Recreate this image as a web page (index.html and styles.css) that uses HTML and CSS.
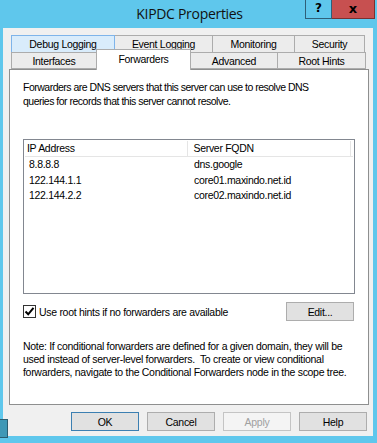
FILE: index.html
```html
<!DOCTYPE html>
<html>
<head>
  <title>KIPDC Properties</title>
  <link rel="stylesheet" href="styles.css">
</head>
<body>

<div class="window">
  <div class="titlebar">
    <span class="title">KIPDC Properties</span>
    <div class="caption-buttons">
      <span class="cap-btn help-btn">?</span>
      <span class="cap-btn close-btn">x</span>
    </div>
  </div>

  <div class="client">
    <div class="tab-row back">
      <div class="tab hover t1">Debug Logging</div>
      <div class="tab t2">Event Logging</div>
      <div class="tab t3">Monitoring</div>
      <div class="tab t4">Security</div>
    </div>
    <div class="tab-row front">
      <div class="tab t5">Interfaces</div>
      <div class="tab selected t6">Forwarders</div>
      <div class="tab t7">Advanced</div>
      <div class="tab t8">Root Hints</div>
    </div>

    <div class="panel">
      <p class="intro">Forwarders are DNS servers that this server can use to resolve DNS<br>queries for records that this server cannot resolve.</p>

      <div class="listbox">
        <div class="list-header">
          <div class="col ip">IP Address</div>
          <div class="col fqdn">Server FQDN</div>
          <div class="col rest"></div>
        </div>
        <div class="list-row"><span class="ip">8.8.8.8</span><span class="fqdn">dns.google</span></div>
        <div class="list-row"><span class="ip">122.144.1.1</span><span class="fqdn">core01.maxindo.net.id</span></div>
        <div class="list-row"><span class="ip">122.144.2.2</span><span class="fqdn">core02.maxindo.net.id</span></div>
      </div>

      <div class="option-row">
        <label class="check">
          <span class="box">
            <svg width="11" height="11" viewBox="0 0 11 11"><path d="M1.5 5.5 L4.2 8.3 L9.5 1.8" fill="none" stroke="#000" stroke-width="2"/></svg>
          </span>
          Use root hints if no forwarders are available
        </label>
        <button class="btn edit-btn">Edit...</button>
      </div>

      <p class="note">Note: If conditional forwarders are defined for a given domain, they will be<br>used instead of server-level forwarders.&nbsp; To create or view conditional<br>forwarders, navigate to the Conditional Forwarders node in the scope tree.</p>
    </div>

    <div class="dialog-buttons">
      <button class="btn default">OK</button>
      <button class="btn">Cancel</button>
      <button class="btn" disabled>Apply</button>
      <button class="btn">Help</button>
    </div>
  </div>
</div>

<div class="behind"></div>

</body>
</html>
```

FILE: styles.css
```css
body {
  margin: 0;
  background: #5fc7ec;
  font-family: 'Liberation Sans', Arial, sans-serif;
  font-size: 10.5px;
  letter-spacing: -0.3px;
  color: #000;
  width: 377px;
  height: 443px;
  overflow: hidden;
  position: relative;
  white-space: nowrap;
}

.titlebar {
  position: relative;
  height: 28px;
  text-align: center;
}

.title {
  display: inline-block;
  font-family: 'Open Sans', sans-serif;
  font-size: 14px;
  letter-spacing: -0.3px;
  line-height: 27px;
  margin-left: 2px;
  color: #111;
}

.caption-buttons {
  position: absolute;
  top: 0;
  right: 2px;
  display: flex;
}

.cap-btn {
  height: 18px;
  line-height: 17px;
  text-align: center;
  font-family: 'DejaVu Sans', sans-serif;
  font-weight: bold;
  font-size: 12px;
  letter-spacing: 0;
  border: 1px solid #2f5f78;
  border-top: none;
}

.help-btn {
  width: 25px;
  background: #5fc7ec;
}

.close-btn {
  width: 42px;
  background: #c75050;
  border-left: none;
  border-color: #7a3030;
  font-size: 13px;
}

.client {
  background: #f0f0f0;
  margin: 0 4px 0 3px;
  height: 408px;
  padding: 7px 5px 0 6px;
  box-sizing: border-box;
}

/* tabs */
.tab-row {
  display: flex;
  margin-left: 2px;
  height: 17px;
}

.tab {
  box-sizing: border-box;
  height: 17px;
  border: 1px solid #acacac;
  border-left: none;
  background: #ececec;
  text-align: center;
  line-height: 16px;
}

.tab-row .tab:first-child {
  border-left: 1px solid #acacac;
}

.tab-row.back .tab {
  border-bottom: none;
}

.tab.hover {
  background: #d9ecfb;
  border-color: #7eb4ea;
}

.tab-row.back .tab.hover {
  border-left-color: #7eb4ea;
}

.front {
  position: relative;
  z-index: 1;
}

.tab.selected {
  background: #fff;
  height: 21px;
  margin-top: -3px;
  border-bottom: none;
  border-left: 1px solid #acacac;
  line-height: 18px;
  margin-left: -1px;
  position: relative;
}

.t1 { width: 104px; }
.t2 { width: 98px; }
.t3 { width: 82px; }
.t4 { width: 70px; }
.t5 { width: 86px; }
.t6 { width: 95px; }
.t7 { width: 87px; }
.t8 { width: 88px; }

.panel {
  background: #fff;
  border: 1px solid #8e8f8f;
  width: 360px;
  height: 336px;
  box-sizing: border-box;
  margin-top: 0;
  padding: 0 0 0 13px;
}

.intro {
  margin: 10px 0 0;
  line-height: 14px;
  letter-spacing: -0.5px;
}

.listbox {
  margin-top: 31px;
  width: 332px;
  height: 155px;
  box-sizing: border-box;
  border: 1px solid #828790;
  padding: 1px;
}

.list-header {
  display: flex;
  height: 16px;
  border-bottom: 1px solid #e5e5e5;
  box-sizing: border-box;
}

.col {
  line-height: 15px;
  box-sizing: border-box;
  border-right: 1px solid #e5e5e5;
  padding-left: 2px;
}

.col.ip { width: 165px; }
.col.fqdn { width: 164px; padding-left: 5px; }
.col.rest { flex: 1; border-right: none; }

.list-row {
  display: flex;
  height: 15.5px;
  line-height: 15px;
}

.list-row .ip {
  width: 165px;
  padding-left: 4px;
  box-sizing: border-box;
}

.list-row .fqdn {
  padding-left: 4px;
}

.option-row {
  display: flex;
  align-items: center;
  justify-content: space-between;
  width: 331px;
  margin-top: 8px;
}

.check {
  display: flex;
  align-items: center;
  gap: 3px;
}

.box {
  width: 13px;
  height: 13px;
  box-sizing: border-box;
  border: 1px solid #333;
  background: #fff;
  display: flex;
  align-items: center;
  justify-content: center;
}

.btn {
  box-sizing: border-box;
  width: 68px;
  height: 19px;
  padding: 0;
  background: #e1e1e1;
  border: 1px solid #adadad;
  font-family: 'Liberation Sans', Arial, sans-serif;
  font-size: 10.5px;
  letter-spacing: -0.3px;
  color: #000;
}

.btn.default {
  border-color: #3c7fb1;
}

.btn:disabled {
  background: #f4f4f4;
  border-color: #c4c4c4;
  color: #a0a0a0;
}

.note {
  margin: 19px 0 0;
  line-height: 13px;
}

.dialog-buttons {
  display: flex;
  justify-content: flex-end;
  gap: 8px;
  margin-top: 7px;
  width: 358px;
}

.behind {
  position: absolute;
  left: 0;
  top: 419px;
  width: 7px;
  height: 17px;
  background: #3f98b6;
  border: 1px solid #2a5d70;
  border-left: none;
}
```
